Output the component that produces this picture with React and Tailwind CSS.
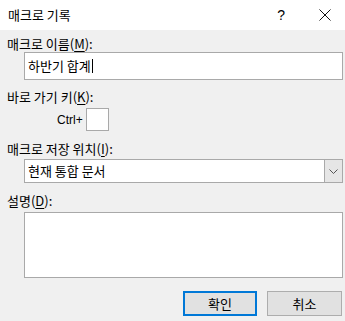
import React from 'react';

const font = { fontFamily: '"Noto Sans CJK KR", "Noto Sans", sans-serif' };

const Label = ({ text, mn, className = '' }) => (
    <div className={`text-[13px] leading-[16px] text-black ${className}`}>
        {text}(<span className="underline underline-offset-2">{mn}</span>):
    </div>
);

const App = () => {
    return (
        <div className="w-[345px] h-[321px] bg-[#f0f0f0] overflow-hidden" style={font}>
            {/* title bar */}
            <div className="h-[30px] bg-white flex items-center pl-[8px] pr-[14px]">
                <span className="text-[13px] leading-[16px] text-black">매크로 기록</span>
                <span className="ml-auto mr-[34px] text-[14px] text-black" style={{ fontFamily: '"Liberation Sans", sans-serif' }}>?</span>
                <svg width="12" height="12" viewBox="0 0 12 12">
                    <path d="M0.5 0.5 L11.5 11.5 M11.5 0.5 L0.5 11.5" stroke="#111" strokeWidth="1" fill="none" />
                </svg>
            </div>

            <div className="pl-[7px] pr-[2px]">
                <Label text="매크로 이름" mn="M" className="mt-[6px]" />
                <div className="ml-[17px] h-[28px] bg-white border border-[#a9a9a9] flex items-center pl-[3px]">
                    <span className="text-[13px] leading-[16px] text-black">하반기 합계</span>
                    <span className="w-[1px] h-[14px] bg-black ml-[1px]" />
                </div>

                <Label text="바로 가기 키" mn="K" className="mt-[9px]" />
                <div className="flex items-center mt-[3px] ml-[50px]">
                    <span className="text-[12px] leading-[16px] text-black" style={{ fontFamily: '"Liberation Sans", sans-serif' }}>Ctrl+</span>
                    <div className="ml-[3px] w-[23px] h-[23px] bg-white border border-[#a9a9a9]" />
                </div>

                <Label text="매크로 저장 위치" mn="I" className="mt-[10px]" />
                <div className="ml-[17px] mt-[2px] h-[24px] bg-white border border-[#a9a9a9] flex items-center">
                    <span className="pl-[3px] text-[13px] leading-[16px] text-black">현재 통합 문서</span>
                    <div className="ml-auto w-[18px] h-full bg-[#e6e6e6] border-l border-[#a9a9a9] flex items-center justify-center">
                        <svg width="9" height="5" viewBox="0 0 9 5">
                            <path d="M0.5 0.5 L4.5 4.5 L8.5 0.5" stroke="#555" strokeWidth="1" fill="none" />
                        </svg>
                    </div>
                </div>

                <Label text="설명" mn="D" className="mt-[10px]" />
                <div className="ml-[17px] mt-[3px] h-[66px] bg-white border border-[#a9a9a9]" />

                <div className="flex justify-end gap-[10px] mt-[13px] pr-[1px]">
                    <button className="w-[74px] h-[25px] bg-[#e1e1e1] border-2 border-[#0078d7] text-[13px] leading-[16px] text-black">확인</button>
                    <button className="w-[75px] h-[25px] bg-[#e1e1e1] border border-[#adadad] text-[13px] leading-[16px] text-black">취소</button>
                </div>
            </div>
        </div>
    );
};

export default App;
